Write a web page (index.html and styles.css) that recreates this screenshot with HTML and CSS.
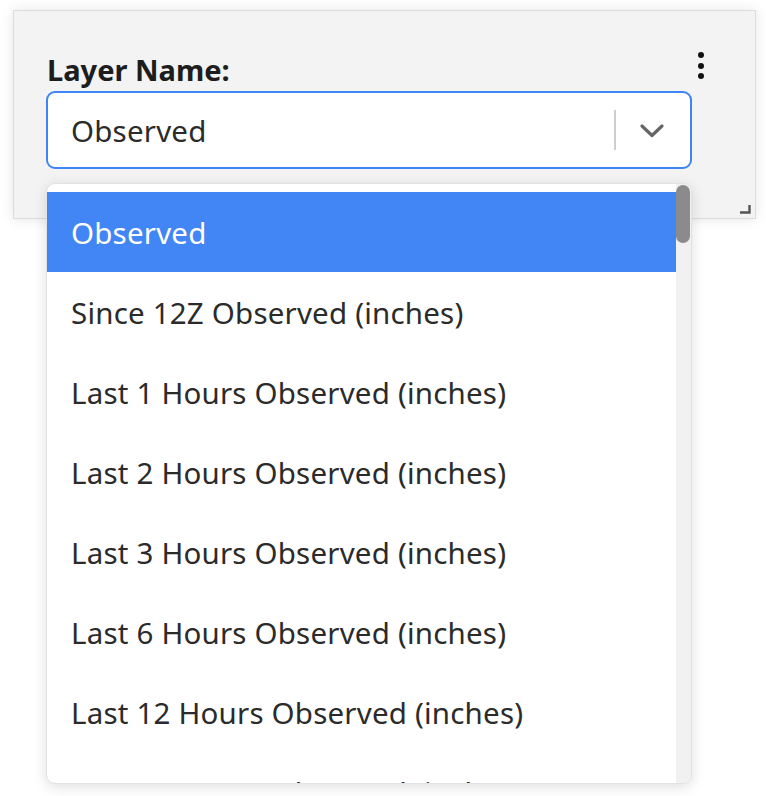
FILE: index.html
```html
<!DOCTYPE html>
<html>
<head>
<meta charset="utf-8">
<link rel="stylesheet" href="styles.css">
</head>
<body>
<div class="panel">
  <div class="kebab"><span></span><span></span><span></span></div>
  <label class="label">Layer Name:</label>
  <div class="select-wrap">
    <div class="select">
      <div class="value">Observed</div>
      <div class="indicators">
        <span class="sep"></span>
        <svg class="chev" width="24" height="14" viewBox="0 0 24 14"><path d="M2 2 L12 11.5 L22 2" fill="none" stroke="#666" stroke-width="3.2" stroke-linecap="round" stroke-linejoin="round"/></svg>
      </div>
    </div>
    <div class="menu">
      <ul class="list">
        <li class="opt active">Observed</li>
        <li class="opt">Since 12Z Observed (inches)</li>
        <li class="opt">Last 1 Hours Observed (inches)</li>
        <li class="opt">Last 2 Hours Observed (inches)</li>
        <li class="opt">Last 3 Hours Observed (inches)</li>
        <li class="opt">Last 6 Hours Observed (inches)</li>
        <li class="opt">Last 12 Hours Observed (inches)</li>
        <li class="opt">Last 24 Hours Observed (inches)</li>
      </ul>
      <div class="track"><div class="thumb"></div></div>
    </div>
  </div>
  <svg class="grip" width="12" height="10" viewBox="0 0 12 10"><path d="M1 8.5 H10.5 V1" fill="none" stroke="#555" stroke-width="2.4"/></svg>
</div>
</body>
</html>
```
FILE: styles.css
```css
html, body {
  margin: 0;
  padding: 0;
  background: #ffffff;
  font-family: "Noto Sans", "Open Sans", sans-serif;
  color: #222;
}
body {
  min-height: 796px;
  padding-top: 10px;
  box-sizing: border-box;
}
.panel {
  position: relative;
  box-sizing: border-box;
  margin: 0 0 0 13px;
  width: 743px;
  height: 209px;
  background: #f3f3f3;
  border: 1px solid #dcdcdc;
  box-shadow: 0 0 12px rgba(0,0,0,0.10);
  padding: 39px 63px 0 32px;
}
.label {
  display: block;
  font-weight: 700;
  font-size: 29px;
  line-height: 40px;
  color: #1d1d1d;
  margin-left: 1px;
  height: 41px;
}
.kebab {
  position: absolute;
  left: 684px;
  top: 41px;
  display: flex;
  flex-direction: column;
  gap: 4.5px;
}
.kebab span {
  width: 6px;
  height: 6px;
  border-radius: 50%;
  background: #111;
}
.select-wrap {
  position: relative;
}
.select {
  box-sizing: border-box;
  height: 78px;
  background: #fff;
  border: 2px solid #3f84f5;
  border-radius: 9px;
  display: flex;
  align-items: center;
}
.value {
  flex: 1;
  padding-left: 23px;
  font-size: 29.5px;
  letter-spacing: 0.2px;
  color: #2b2b2b;
}
.indicators {
  display: flex;
  align-items: center;
  height: 100%;
}
.sep {
  width: 2px;
  height: 40px;
  background: #cfcfcf;
}
.chev {
  margin: 2px 26px 0 24px;
}
.menu {
  position: absolute;
  left: 0;
  right: 0;
  top: calc(100% + 14px);
  height: 601px;
  box-sizing: border-box;
  background: #fff;
  border: 1px solid #e2e2e2;
  border-radius: 9px;
  box-shadow: 0 3px 14px rgba(0,0,0,0.13);
  display: flex;
  overflow: hidden;
  z-index: 2;
}
.list {
  flex: 1;
  list-style: none;
  margin: 0;
  padding: 8px 0 0 0;
  overflow: hidden;
}
.opt {
  height: 80px;
  display: flex;
  align-items: center;
  padding-left: 24px;
  font-size: 29.5px;
  letter-spacing: 0.2px;
  color: #2b2b2b;
  white-space: nowrap;
}
.opt.active {
  background: #4285f4;
  color: #fff;
}
.track {
  width: 15px;
  background: #f1f1f1;
  padding-top: 1px;
}
.thumb {
  width: 14px;
  height: 58px;
  border-radius: 7px;
  background: #8b8b8b;
}
.grip {
  position: absolute;
  right: 4px;
  bottom: 4px;
}
```
